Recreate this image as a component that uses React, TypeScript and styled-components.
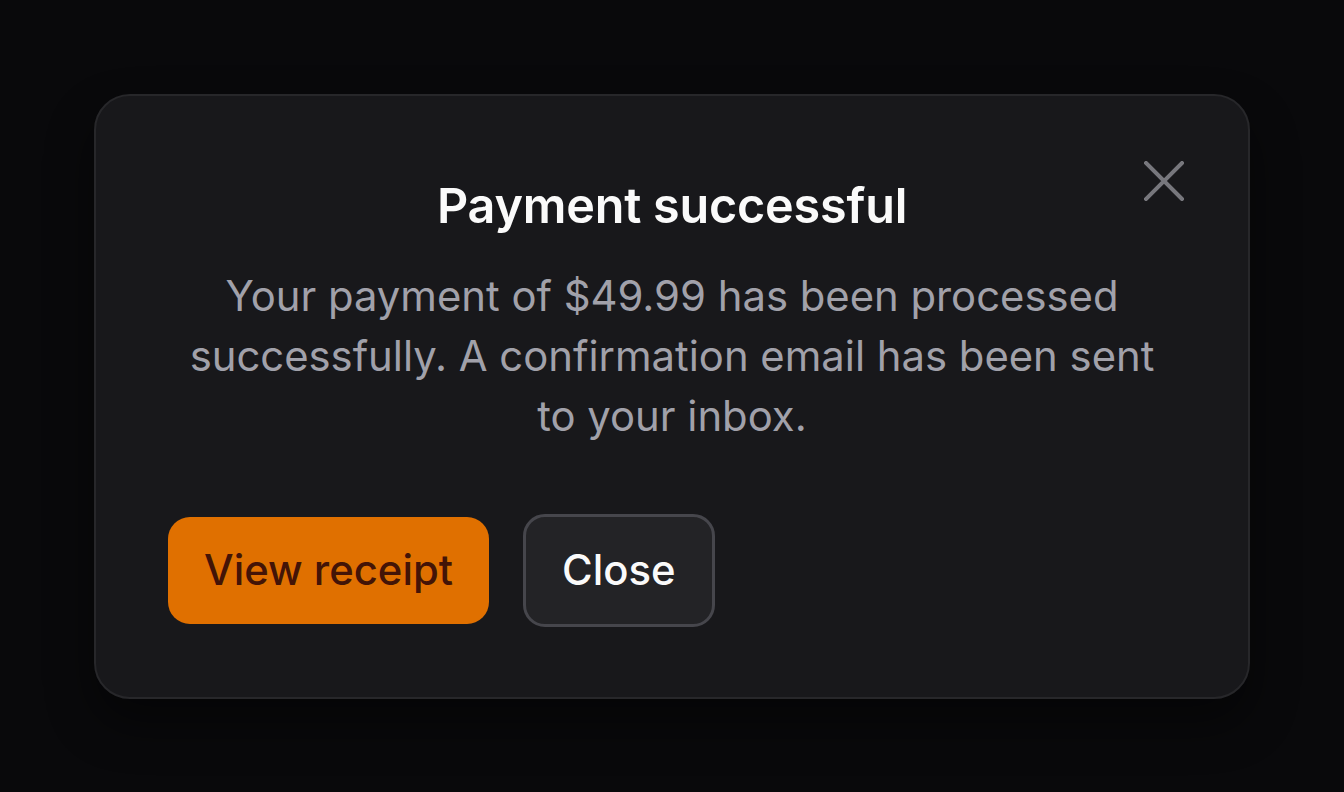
import React from "react";
import styled, { createGlobalStyle } from "styled-components";

const Global = createGlobalStyle`
  html, body { margin: 0; padding: 0; background: #09090b; }
  body { font-family: Inter, "Noto Sans", sans-serif; -webkit-font-smoothing: antialiased; }
  * { box-sizing: border-box; }
`;

const Page = styled.div`
  width: 1344px;
  height: 792px;
  display: flex;
  align-items: center;
  justify-content: center;
  background: #09090b;
`;

const Dialog = styled.div`
  position: relative;
  width: 1156px;
  height: 605px;
  background: #18181b;
  border: 2px solid #27272a;
  border-radius: 36px;
  box-shadow: 0 24px 48px rgba(0, 0, 0, 0.45);
  padding: 81px 72px 70px;
  display: flex;
  flex-direction: column;
`;

const CloseIcon = styled.button`
  position: absolute;
  top: 57px;
  right: 56px;
  width: 56px;
  height: 56px;
  padding: 0;
  border: none;
  background: transparent;
  color: #77777d;
  display: flex;
  align-items: center;
  justify-content: center;
  cursor: pointer;
`;

const Title = styled.h2`
  margin: 0;
  font-size: 48.5px;
  font-weight: 600;
  line-height: 58px;
  color: #fafafa;
  text-align: center;
  letter-spacing: -0.2px;
`;

const Body = styled.p`
  margin: 31px 0 0;
  font-size: 41.8px;
  line-height: 60px;
  font-weight: 400;
  color: #a1a1aa;
  text-align: center;
`;

const Actions = styled.div`
  margin-top: auto;
  display: flex;
  align-items: center;
  gap: 34px;
`;

const Button = styled.button<{ $variant: "primary" | "secondary" }>`
  font-family: Inter, "Noto Sans", sans-serif;
  font-size: 41.8px;
  font-weight: 500;
  line-height: 48px;
  border-radius: 22px;
  cursor: pointer;
  padding: 0 36px;
  height: ${(p) => (p.$variant === "primary" ? "107px" : "113px")};
  background: ${(p) => (p.$variant === "primary" ? "#e07000" : "#232326")};
  color: ${(p) => (p.$variant === "primary" ? "#431407" : "#fafafa")};
  border: ${(p) => (p.$variant === "primary" ? "none" : "3px solid #46464c")};
`;

export default function App() {
  return (
    <Page>
      <Global />
      <Dialog>
        <CloseIcon aria-label="Close">
          <svg width="40" height="40" viewBox="0 0 40 40" fill="none">
            <path d="M2 2L38 38M38 2L2 38" stroke="currentColor" strokeWidth="4" strokeLinecap="square" />
          </svg>
        </CloseIcon>
        <Title>Payment successful</Title>
        <Body>
          Your payment of $49.99 has been processed successfully. A confirmation email has been sent to your inbox.
        </Body>
        <Actions>
          <Button $variant="primary">View receipt</Button>
          <Button $variant="secondary">Close</Button>
        </Actions>
      </Dialog>
    </Page>
  );
}
